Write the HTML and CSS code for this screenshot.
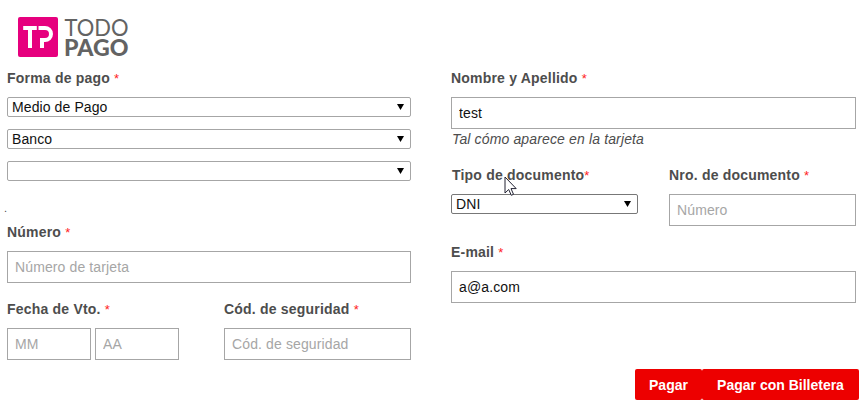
FILE: index.html
```
<!DOCTYPE html>
<html lang="es">
<head>
<meta charset="utf-8">
<title>Todo Pago</title>
<link rel="stylesheet" href="styles.css">
</head>
<body>
<header class="brand">
  <svg width="116" height="50" viewBox="0 0 116 50" role="img" aria-label="Todo Pago">
    <rect x="1" y="1" width="40" height="40" rx="2" fill="#e6007e"/>
    <path d="M6.200 12H19.800M13 12V32M21.500 12H28A6 6 0 0 1 28 24H25V32" fill="none" stroke="#fff" stroke-width="4"/>
    <text class="brand-thin" x="47.500" y="19.500" textLength="64" lengthAdjust="spacingAndGlyphs">TODO</text>
    <text class="brand-heavy" x="47" y="40" textLength="64.500" lengthAdjust="spacingAndGlyphs">PAGO</text>
  </svg>
</header>
<form class="form">
  <div class="column">
    <div class="label">Forma de pago <i>*</i></div>
    <div class="select"><span>Medio de Pago</span><svg width="7" height="6"><path d="M0 0H7L3.500 6Z"/></svg></div>
    <div class="select"><span>Banco</span><svg width="7" height="6"><path d="M0 0H7L3.500 6Z"/></svg></div>
    <div class="select"><span></span><svg width="7" height="6"><path d="M0 0H7L3.500 6Z"/></svg></div>
    <div class="dot">.</div>
    <div class="label">Número <i>*</i></div>
    <input class="input" placeholder="Número de tarjeta">
    <div class="row next">
      <div class="expiry">
        <div class="label">Fecha de Vto. <i>*</i></div>
        <div class="row pair"><input class="input" placeholder="MM"><input class="input" placeholder="AA"></div>
      </div>
      <div class="grow">
        <div class="label">Cód. de seguridad <i>*</i></div>
        <input class="input" placeholder="Cód. de seguridad">
      </div>
    </div>
  </div>
  <div class="column column-right">
    <div class="label">Nombre y Apellido <i>*</i></div>
    <input class="input" value="test">
    <div class="hint">Tal cómo aparece en la tarjeta</div>
    <div class="row document">
      <div class="doc-type">
        <div class="label">Tipo de documento<i>*</i></div>
        <div class="select select-dark"><span>DNI</span><svg width="7" height="6"><path d="M0 0H7L3.500 6Z"/></svg></div>
        <svg class="pointer" width="13" height="21" viewBox="0 0 13 21"><path d="M1 1V17L4.700 13.500L7.300 19.300L9.500 18.300L7 12.600H12.200Z" fill="#fff" stroke="#223" stroke-width="1"/></svg>
      </div>
      <div class="grow">
        <div class="label">Nro. de documento <i>*</i></div>
        <input class="input" placeholder="Número">
      </div>
    </div>
    <div class="label next">E-mail <i>*</i></div>
    <input class="input" value="a@a.com">
  </div>
</form>
<footer class="actions"><button class="pay">Pagar</button><button class="wallet">Pagar con Billetera</button></footer>
</body>
</html>
```
FILE: styles.css
```
* { box-sizing: border-box; }
body { margin: 0; width: 867px; height: 408px; overflow: hidden; background: #fff; color: #4d4d4d; font: 14px/18px "Liberation Sans", Arial, sans-serif; }
.brand { height: 69px; padding: 16px 0 0 17px; }
.brand svg { display: block; }
.brand-thin { font: 400 23px Lato, sans-serif; fill: #636363; }
.brand-heavy { font: 900 23px Lato, sans-serif; fill: #636363; }
.form { display: flex; gap: 40px; height: 300px; padding-left: 7px; }
.column { width: 404px; }
.column-right { width: 405px; }
.label { height: 18px; margin-bottom: 10px; font-weight: 700; letter-spacing: .2px; white-space: nowrap; }
.label i { color: #f22; font-size: 13px; font-weight: 400; font-style: normal; }
.select { display: flex; align-items: center; justify-content: space-between; height: 20px; margin-bottom: 12px; padding: 0 6px 0 4px; border: 1px solid #a6a6a6; border-radius: 2px; color: #111; letter-spacing: .1px; }
.select-dark { border-color: #777; }
.select svg { fill: #000; }
.dot { height: 30px; margin-left: -3px; line-height: 30px; font-size: 11px; }
.input { display: block; width: 100%; height: 32px; padding: 0 7px; border: 1px solid #a6a6a6; border-radius: 0; outline: 0; background: #fff; color: #111; font: 14px "Liberation Sans", Arial, sans-serif; letter-spacing: .12px; }
.input::placeholder { color: #a6a6a6; opacity: 1; }
.row { display: flex; }
.next { margin-top: 17px; }
.expiry { width: 217px; }
.pair { gap: 4px; }
.pair .input { width: 84px; }
.grow { flex: 1; }
.hint { height: 20px; padding-left: 1px; line-height: 20px; font-style: italic; letter-spacing: .14px; }
.document { margin-top: 17px; }
.doc-type { position: relative; width: 187px; margin-right: 31px; }
.doc-type .label { padding-left: 1px; }
.pointer { position: absolute; left: 53px; top: 10px; }
.actions { display: flex; justify-content: flex-end; padding-right: 8px; }
.actions button { height: 31px; padding: 0; border: 0; border-radius: 2px; background: #ed0000; color: #fff; font: 700 14px "Liberation Sans", Arial, sans-serif; }
.pay { width: 67px; }
.wallet { width: 157px; }
```
